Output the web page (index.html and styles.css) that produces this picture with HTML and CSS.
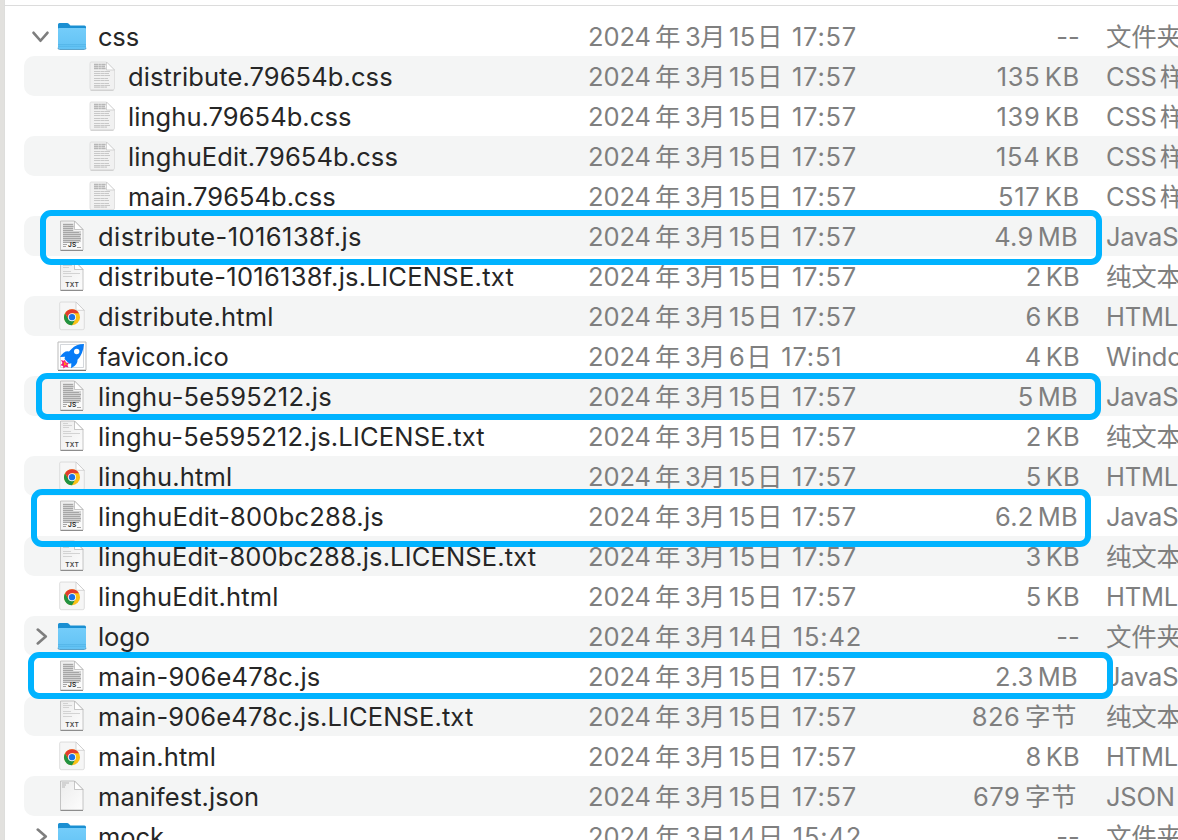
FILE: index.html
```html
<!DOCTYPE html>
<html lang="zh-CN">
<head>
<meta charset="utf-8">
<title>文件列表</title>
<link rel="stylesheet" href="styles.css">
</head>
<body>
<svg class="defs" width="0" height="0" aria-hidden="true">
  <defs>
    <linearGradient id="paper" x1="0" y1="0" x2="1" y2="1"><stop offset="0" stop-color="#ececec"/><stop offset="1" stop-color="#fdfdfd"/></linearGradient>
    <linearGradient id="blue" x1="0" y1="0" x2="0" y2="1"><stop offset="0" stop-color="#74cdfa"/><stop offset="1" stop-color="#62c2f4"/></linearGradient>
    <linearGradient id="fold" x1="0" y1="1" x2="1" y2="0"><stop offset=".4" stop-color="#ffffff"/><stop offset="1" stop-color="#c8c8c8"/></linearGradient>
    <symbol id="folder" viewBox="0 0 32 32">
      <path d="M2 4.500Q2 3 3.500 3H11q1.200 0 2 1l1.400 1.500H28.500Q30 5.500 30 7V14H2z" fill="#1a8fd2"/>
      <path d="M2 9q0-1 1-1h26q1 0 1 1v18.500q0 1.500-1.500 1.500h-25Q2 29 2 27.500z" fill="url(#blue)"/>
      <path d="M2 24.500h28M2 26.300h28" stroke="#50b1e5" stroke-width=".7"/>
      <path d="M2 27.800q0 1.700 1.500 1.700h25q1.500 0 1.500-1.700" fill="none" stroke="#4a98c4" stroke-width=".9"/>
    </symbol>
    <symbol id="page" viewBox="0 0 32 32">
      <path d="M4.500 1h14l8.500 8.500V30h-22.500z" fill="url(#paper)" stroke="#b8b8b8" stroke-width=".8"/>
      <path d="M4.500 30.500H27" stroke="#8d8d8d"/>
      <path d="M18.500 1v8.500H27z" fill="url(#fold)" stroke="#b0b0b0" stroke-width=".7"/>
    </symbol>
    <symbol id="js" viewBox="0 0 32 32">
      <use href="#page"/>
      <path d="M7 3.500h10.500v7.500H25V22H7z" fill="#d2d2d2"/>
      <path d="M7 4.500h10M7 6.500h10.500M7 8.500h10M7 10.500h10M7 12.500h16M7 14.500h18M7 16.500h17M7 18.500h18M7 20.500h17M7 22.500h16M7 24.500h4M7 26.500h3M21 27.500h4" stroke="#a6a6a6" stroke-width="1"/>
      <text x="16.200" y="27.300" class="badge badge-js">JS</text>
    </symbol>
    <symbol id="txt" viewBox="0 0 32 32">
      <use href="#page"/>
      <path d="M7 3.500h5M7 5.500h9M7 7.500h6M7 11.500h8M7 13.500h17M7 16.500h9" stroke="#c4c4c4" stroke-width=".7"/>
      <text x="16.200" y="26.700" class="badge">TXT</text>
    </symbol>
    <symbol id="json" viewBox="0 0 32 32">
      <use href="#page"/>
      <path d="M6 3h7M6 5h4M6 7h3" stroke="#aaa" stroke-width=".8"/>
    </symbol>
    <symbol id="css" viewBox="0 0 32 32">
      <path d="M5 2h15.500l8 8v18q0 2-2 2H5.500Q4 30 4 28V3.500Q4 2 5 2z" fill="#f1f1f1" stroke="#d9d9d9" stroke-width=".8"/>
      <path d="M8 4.500h12M8 6.500h11M8 8.500h12" stroke="#b7b7b7" stroke-width="1.300" stroke-dasharray="4 .4 2.500 .4"/>
      <path d="M8 11.500h16M8 13.500h15M8 15.500h16M8 18.500h14M8 20.500h15M8 23.500h15M8 25.500h16M8 27.200h13" stroke="#c8c8c8" stroke-width="1.200" stroke-dasharray="6 .4 3.700 .3"/>
      <path d="M20.500 2v8h8z" fill="#fff" stroke="#c4c4c4" stroke-width=".7"/>
      <path d="M4.500 30.300h23" stroke="#c4c4c4" stroke-width=".8"/>
    </symbol>
    <symbol id="html" viewBox="0 0 32 32">
      <path d="M5 2h15l8.300 8.300V28q0 1.700-1.700 1.700H5.400Q3.700 29.700 3.700 28V3.300Q3.700 2 5 2z" fill="#f6f6f6" stroke="#d5d5d5" stroke-width=".8"/>
      <path d="M20 2v8.300h8.300z" fill="url(#fold)" stroke="#c6c6c6" stroke-width=".7"/>
      <g transform="translate(16 17.200)">
        <circle r="8" fill="#fbc116"/>
        <path d="M-6.930-4A8 8 0 0 0 0 8L3.460 2 0 4-3.460 2z" fill="#229342"/>
        <path d="M-6.930-4A8 8 0 0 1 6.930-4H0L-3.460 2z" fill="#e33b2e"/>
        <circle r="4" fill="#fff"/><circle r="3.150" fill="#1a73e8"/>
      </g>
    </symbol>
    <symbol id="ico" viewBox="0 0 32 32">
      <path d="M2 2h28v28H2z" fill="#fff" stroke="#bbb"/><path d="M2 30.500h28" stroke="#777"/>
      <path d="M4.500 4.500h23v23h-23z" fill="#fff" stroke="#c9cdd2" stroke-width=".8"/>
      <path d="M28 4Q20 4 15.500 9L13 11.500Q8 10.500 4 17l5-.2L8.500 19l4.800 4.800 2-.5-.2 5Q22 25 21.500 19.800q5.500-5.300 6.500-15.800z" fill="#087cf7"/>
      <circle cx="20.700" cy="11.500" r="2.700" fill="#fff"/>
      <path d="M5 20l2.500.8L9 20l1 2.500 3 .5-1.500 2 1 2.500-3-.7L7.500 28.500 7 26l-2.500-.7L6.500 23z" fill="#f51c7c"/><path d="M8 21.500l3.500 3.500-2.300-.1-1.200 1z" fill="#ff8a13"/>
    </symbol>
    <symbol id="chevron" viewBox="0 0 16 16"><path d="M4.500 1.500L12 8l-7.500 6.500" fill="none" stroke="#7e7e7e" stroke-width="2.500" stroke-linecap="round" stroke-linejoin="round"/></symbol>
  </defs>
</svg>
<main class="finder">
  <div class="list" id="list"></div>
  <div class="mark mark-distribute"></div>
  <div class="mark mark-linghu"></div>
  <div class="mark mark-edit"></div>
  <div class="mark mark-main"></div>
</main>
<script src="list.js"></script>
</body>
</html>
```
FILE: styles.css
```css
body { margin: 0; background: #fff; overflow: hidden; }
.defs { position: absolute; }
.finder {
  position: relative; box-sizing: border-box; height: 840px; overflow: hidden;
  border-left: 4px solid #e2e1de; box-shadow: inset 1px 0 #dededc;
  font-family: Inter, "Noto Sans CJK SC", sans-serif; font-size: 25.500px; color: #262626;
}
.list { border-top: 1px solid #dcdcdc; margin-top: 5px; padding: 10px 0 0 20px; }
.row {
  display: grid; grid-template-columns: 564px 330px 162px 1fr; align-items: center;
  height: 40px; border-radius: 10px 0 0 10px; white-space: nowrap; line-height: 40px;
}
.row:nth-child(even) { background: #f4f5f5; }
.name { display: flex; align-items: center; height: 40px; }
.label { padding-top: 2px; }
.arrow { display: flex; width: 32px; height: 40px; align-items: center; justify-content: center; }
.arrow svg { width: 17px; height: 17px; margin-left: 3px; }
.open .arrow svg { transform: rotate(90deg); margin-left: 0; }
.child { padding-left: 30px; }
.icon { width: 32px; height: 32px; margin-right: 10px; }
.date, .size, .type { box-sizing: border-box; height: 40px; padding-top: 1px; color: #7f7f7f; }
.date { display: flex; align-items: baseline; }
.date i, .size i, .type i { font-style: normal; line-height: 1; font-family: "Noto Sans CJK SC", sans-serif; }
.year { width: 67px; letter-spacing: -.1px; }
.nian { width: 30px; }
.month { width: 15px; }
.yue { width: 29px; }
.day { letter-spacing: .5px; padding-right: 1px; }
.ri { width: 35px; }
.time { letter-spacing: .8px; }
.size { text-align: right; word-spacing: -3px; letter-spacing: .2px; }
.size.wide { letter-spacing: .7px; word-spacing: -3.500px; }
.size.mega { padding-right: 2px; }
.size.bytes { padding-right: 3px; letter-spacing: .5px; }
.type { padding-left: 26px; overflow: hidden; word-spacing: -4px; letter-spacing: -.2px; }
.badge { font: 600 6.500px Inter, sans-serif; letter-spacing: .3px; text-anchor: middle; fill: #444; }
.badge-js { font-size: 6.500px; fill: #222; }
.mark { position: absolute; box-sizing: border-box; border: 6px solid #00b3ff; border-radius: 11px; }
.mark-distribute { left: 36px; top: 210px; width: 1062px; height: 55px; }
.mark-linghu { left: 32px; top: 373px; width: 1065px; height: 47px; }
.mark-edit { left: 27px; top: 489px; width: 1060px; height: 58px; }
.mark-main { left: 24px; top: 652px; width: 1085px; height: 47px; }
```
FILE: list.js
```js
// icon, name, letter spacing of the name, day and time, size, type, state
const files = [
  ["folder", "css", -.2, "15 17:57", "--", "文件夹", "open"],
  ["css", "distribute.79654b.css", .1, "15 17:57", "135 KB", "CSS 样式", "child"],
  ["css", "linghu.79654b.css", .06, "15 17:57", "139 KB", "CSS 样式", "child"],
  ["css", "linghuEdit.79654b.css", .1, "15 17:57", "154 KB", "CSS 样式", "child"],
  ["css", "main.79654b.css", .04, "15 17:57", "517 KB", "CSS 样式", "child"],
  ["js", "distribute-1016138f.js", .42, "15 17:57", "4.9 MB", "JavaScript"],
  ["txt", "distribute-1016138f.js.LICENSE.txt", .28, "15 17:57", "2 KB", "纯文本"],
  ["html", "distribute.html", .2, "15 17:57", "6 KB", "HTML"],
  ["ico", "favicon.ico", -.1, "6 17:51", "4 KB", "Windows"],
  ["js", "linghu-5e595212.js", .24, "15 17:57", "5 MB", "JavaScript"],
  ["txt", "linghu-5e595212.js.LICENSE.txt", .18, "15 17:57", "2 KB", "纯文本"],
  ["html", "linghu.html", .16, "15 17:57", "5 KB", "HTML"],
  ["js", "linghuEdit-800bc288.js", .2, "15 17:57", "6.2 MB", "JavaScript"],
  ["txt", "linghuEdit-800bc288.js.LICENSE.txt", .14, "15 17:57", "3 KB", "纯文本"],
  ["html", "linghuEdit.html", .18, "15 17:57", "5 KB", "HTML"],
  ["folder", "logo", -.1, "14 15:42", "--", "文件夹", "closed"],
  ["js", "main-906e478c.js", .15, "15 17:57", "2.3 MB", "JavaScript"],
  ["txt", "main-906e478c.js.LICENSE.txt", .12, "15 17:57", "826 字节", "纯文本"],
  ["html", "main.html", .1, "15 17:57", "8 KB", "HTML"],
  ["json", "manifest.json", .04, "15 17:57", "679 字节", "JSON"],
  ["folder", "mock", -.1, "14 15:42", "--", "文件夹", "closed"]
];
const han = text => text.replace(/[\u4e00-\u9fff]+/g, "<i>$&</i>");
const unitClass = size => {
  if (size.endsWith("MB")) return "mega";
  if (size.endsWith("节")) return "bytes";
  return size.length > 5 ? "wide" : "";
};
document.getElementById("list").innerHTML = files.map(([icon, name, tracking, when, size, type, state = ""]) => {
  const [day, time] = when.split(" ");
  const arrow = icon === "folder" ? '<svg><use href="#chevron"/></svg>' : "";
  return `<div class="row">
    <div class="name ${state}"><span class="arrow">${arrow}</span><svg class="icon"><use href="#${icon}"/></svg><span class="label" style="letter-spacing:${tracking}px">${name}</span></div>
    <div class="date"><span class="year">2024</span><i class="nian">年</i><span class="month">3</span><i class="yue">月</i><span class="day">${day}</span><i class="ri">日</i><span class="time">${time}</span></div>
    <div class="size ${unitClass(size)}">${han(size)}</div>
    <div class="type">${han(type)}</div>
  </div>`;
}).join("");
```
